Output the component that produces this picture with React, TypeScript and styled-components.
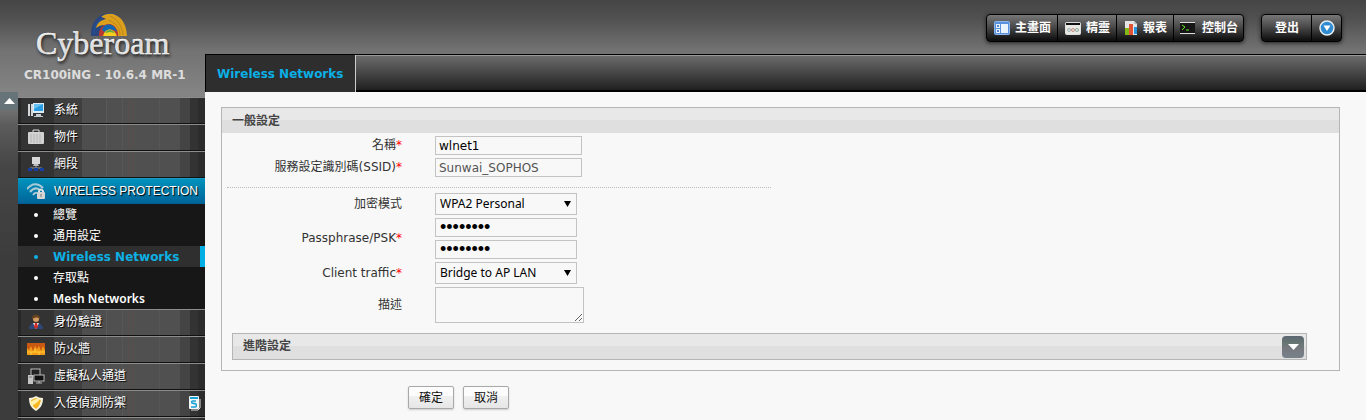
import React from "react";
import styled, { createGlobalStyle } from "styled-components";

const ui = `"DejaVu Sans", "Noto Sans CJK TC", sans-serif`;
const compact = `"Noto Sans", "Noto Sans CJK TC", sans-serif`;
const menu = `"Liberation Sans", "Noto Sans CJK TC", sans-serif`;

const GlobalStyle = createGlobalStyle`
  *, *::before, *::after { box-sizing: border-box; }
  body { margin: 0; font: 12px/18px ${ui}; color: #333; }
  button, input, select, textarea { font: inherit; color: inherit; }
`;

const Page = styled.div`
  display: grid;
  grid-template-columns: 205px minmax(0, 1fr);
  height: 100vh;
  overflow: hidden;
  background: linear-gradient(#454545 0, #525252 20px, #727272 50px, #858585 95px, #5c5c5c 125px, #464646 165px, #3c3c3c 260px);
`;

const Sidebar = styled.aside`
  display: flex;
  flex-direction: column;
  min-height: 0;
`;

const Brand = styled.div`
  display: flex;
  flex-direction: column;
  height: 92px;
  padding-top: 12px;
`;

const Logo = styled.svg`
  display: block;
  margin-left: 28px;
  flex: none;
`;

const Wordmark = styled.text`
  font: 32px "Liberation Serif", serif;
  fill: #fff;
  stroke: #fff;
  stroke-width: 0.4px;
  text-shadow: 1px 2px 3px #222;
`;

const Version = styled.p`
  margin: 0;
  padding-left: 24px;
  font-weight: bold;
  line-height: 18px;
  color: #dcdcdc;
  white-space: nowrap;
`;

const SideBody = styled.div`
  display: flex;
  flex: 1;
  align-items: flex-start;
  min-height: 0;
`;

const Collapse = styled.button`
  display: flex;
  align-items: center;
  justify-content: center;
  width: 18px;
  height: 18px;
  padding: 0;
  border: 0;
  background: #66747a;
`;

const Nav = styled.nav`
  display: flex;
  flex-direction: column;
  flex: 1;
  align-self: stretch;
  margin-top: 5px;
`;

const stripes = `
  linear-gradient(90deg, transparent 0 104px, #6a6a6a44 104px 105px, transparent 105px 110px, #6a4a4a55 110px 111px, transparent 111px 114px, #6a4a4a55 114px 115px, transparent 115px),
  linear-gradient(90deg, #272727 0 3px, #333 3px 36px, #3f3f3f 36px 64px, #4e4e4e 64px 88px, #5a5a5a 88px 89px, #505050 89px 141px, #565656 141px 142px, #505050 142px 162px, #444 162px 172px, #333 172px 180px, #2c2c2c 180px)`;

const NavLink = styled.a<{ $active?: boolean }>`
  display: grid;
  grid-template-columns: 36px 1fr auto;
  align-items: center;
  flex: none;
  height: ${p => (p.$active ? 26 : 27)}px;
  padding-right: 4px;
  padding-bottom: 1px;
  border-top: 1px solid ${p => (p.$active ? "#1b9ac4" : "#8c8c8c")};
  border-bottom: 1px solid ${p => (p.$active ? "#005f92" : "#111")};
  background: ${p => (p.$active ? "linear-gradient(#0092bd, #006499)" : stripes)};
  color: #fff;
  font: 12px/18px ${menu};
  text-decoration: none;
  text-shadow: 1px 1px 1px #000;
  white-space: nowrap;
`;

const NavFill = styled.div`
  flex: 1;
  border-top: 1px solid #8c8c8c;
  background: ${stripes};
`;

const NavIcon = styled.svg`
  display: block;
  justify-self: center;
`;

const SubMenu = styled.ul`
  flex: none;
  margin: 0;
  padding: 0;
  list-style: none;
  background: #171717;
`;

const SubLink = styled.a<{ $active?: boolean }>`
  display: flex;
  align-items: center;
  height: 21px;
  padding-left: 16px;
  gap: 15px;
  border-right: ${p => (p.$active ? "5px solid #00aee4" : "0")};
  background: ${p => (p.$active ? "#2f2f2f" : "transparent")};
  color: ${p => (p.$active ? "#0db1e4" : "#fff")};
  font-family: ${p => (p.$active ? ui : compact)};
  font-weight: ${p => (p.$active ? 700 : 600)};
  text-decoration: none;
  white-space: nowrap;
  &:lang(zh) { font-weight: 400; }
  &::before {
    content: "";
    width: 4px;
    height: 4px;
    border-radius: 50%;
    background: currentColor;
  }
`;

const Main = styled.div`
  display: flex;
  flex-direction: column;
  min-width: 0;
`;

const TopBar = styled.header`
  display: flex;
  justify-content: flex-end;
  align-items: flex-start;
  flex: none;
  gap: 17px;
  height: 54px;
  padding: 14px 24px 0 0;
`;

const ButtonGroup = styled.div`
  display: flex;
  height: 28px;
  border: 1px solid #000;
  border-radius: 4px;
  overflow: hidden;
  background: linear-gradient(#777, #4a4a4a 45%, #111 95%);
  box-shadow: 0 1px 4px #222;
`;

const ToolButton = styled.button`
  display: flex;
  align-items: center;
  justify-content: center;
  gap: 5px;
  padding: 0 6px 0 7px;
  border: 0;
  background: transparent;
  color: #fff;
  font: bold 12px/18px ${ui};
  white-space: nowrap;
  & + & { border-left: 1px solid #000; }
`;

const ConsoleButton = styled(ToolButton)`
  gap: 7px;
  padding: 0 5px 0 6px;
`;

const LogoutButton = styled(ToolButton)`
  padding: 0 12px 0 13px;
`;

const TabBar = styled.div`
  display: flex;
  flex: none;
  height: 38px;
  border-top: 1px solid #000;
  background: linear-gradient(#999 0 1px, #6b6b6b 1px, #202020 35px, #000 35px);
`;

const Tab = styled.a`
  display: flex;
  align-items: center;
  padding: 0 12px 0 11px;
  border-left: 1px solid #000;
  border-right: 1px solid #ccc;
  background: #2e2e2e;
  color: #0bb0e6;
  font-weight: bold;
  text-decoration: none;
`;

const Content = styled.main`
  flex: 1;
  padding: 15px 26px 0 16px;
  background: #f8f8f8;
`;

const Panel = styled.section`
  border: 1px solid #b5b5b5;
  padding-bottom: 10px;
`;

const PanelTitle = styled.h2`
  margin: 0;
  padding: 1px 10px 0;
  height: 25px;
  background: linear-gradient(#e8e8e8 0 48%, #dfdfdf 48%);
  font-size: 12px;
  line-height: 25px;
  font-weight: bold;
  color: #444;
`;

const Fields = styled.div`
  display: grid;
  gap: 3px;
  padding: 3px 0 0;
`;

const Field = styled.div`
  display: grid;
  grid-template-columns: 180px 1fr;
  column-gap: 33px;
  align-items: center;
`;

const Label = styled.label`
  text-align: right;
  line-height: 19px;
  white-space: nowrap;
`;

const Star = styled.span`
  color: #f00;
`;

const Input = styled.input<{ $narrow?: boolean }>`
  display: block;
  width: ${p => (p.$narrow ? 142 : 147)}px;
  height: 19px;
  padding: 0 3px;
  border: 1px solid #c3c3c3;
  background: #f8f8f8;
  color: ${p => (p.disabled ? "#545454" : "#000")};
  &[type="password"] { padding: 0 4px; font-family: "Liberation Sans", sans-serif; font-size: 18px; }
`;

const Stack = styled.div`
  display: grid;
  gap: 3px;
`;

const SelectBox = styled.div`
  position: relative;
  width: 142px;
`;

const Select = styled.select`
  display: block;
  width: 100%;
  height: 22px;
  padding: 0 4px;
  border: 1px solid #c3c3c3;
  border-radius: 0;
  appearance: none;
  background: #f8f8f8;
  color: #000;
  font: 12px/18px ${compact};
`;

const Arrow = styled.svg`
  position: absolute;
  right: 6px;
  top: 8px;
  pointer-events: none;
`;

const TextArea = styled.textarea`
  display: block;
  width: 149px;
  height: 36px;
  border: 1px solid #c3c3c3;
  background: #f8f8f8;
`;

const Divider = styled.hr`
  width: 544px;
  margin: 10px 0 2px 5px;
  border: 0;
  border-top: 1px dotted #bbb;
`;

const Advanced = styled.div`
  display: flex;
  justify-content: space-between;
  margin: 10px 32px 0 10px;
  padding: 2px 2px 1px 10px;
  border: 1px solid #b5b5b5;
  background: linear-gradient(#e8e8e8 0 48%, #dfdfdf 48%);
`;

const AdvancedTitle = styled.h3`
  margin: 0;
  font-size: 12px;
  line-height: 20px;
  color: #444;
`;

const Expand = styled.button`
  display: flex;
  align-items: center;
  justify-content: center;
  width: 22px;
  height: 22px;
  padding: 0;
  border: 0;
  border-radius: 4px;
  background: linear-gradient(#5c6672, #667572 30%, #76797e 55%, #78828a);
`;

const Actions = styled.div`
  display: flex;
  gap: 9px;
  padding: 15px 0 0 187px;
`;

const ActionButton = styled.button`
  width: 46px;
  height: 23px;
  padding: 0;
  border: 1px solid #a8a8a8;
  border-radius: 2px;
  background: linear-gradient(#fcfcfc 0 45%, #f0f0f0 45%, #e6e6e6);
  box-shadow: 0 1px 2px #ccc;
  color: #111;
`;

const CyberoamLogo = () => (
  <Logo width="150" height="54" viewBox="0 0 150 54" role="img" aria-label="Cyberoam">
    <defs>
      <clipPath id="dome"><rect width="150" height="24" /></clipPath>
    </defs>
    <g clipPath="url(#dome)">
      <path d="M63 25C62 11 70 1 82 1c10 0 14 9 10 24Z" fill="#2a4580" />
      <path d="M73 5C83-3 99 4 99 25H88c1-8-3-12-11-12-4 0-6 1-9 3 1-5 5-8 10-9-4-2-5-2-5-2Z" fill="#dca01c" />
      <path d="M82 4c7 3 12 9 13 19M80 8c7 2 12 8 12 15" fill="none" stroke="#a8741a" opacity=".6" />
      <path d="M66 22c0-8 3-12 8-15" fill="none" stroke="#1b5c9c" />
      <path d="M71 25c-1-8 4-13 10-13s10 7 9 13Z" fill="#b8392f" />
      <path d="M74 18c2-8 13-7 15 2-4-3-8-3-11 1Z" fill="#1267b5" />
      <path d="M75 25c1-10 12-10 14 0Z" fill="#f6ce20" />
      <path d="M77 21c2-4 7-4 10 0l-5-1Z" fill="#65a744" />
    </g>
    <Wordmark x="8" y="42">Cyberoam</Wordmark>
  </Logo>
);

const icons: Record<string, React.ReactNode> = {
  system: <><path d="M2 2v12M5 2v12" stroke="#d4d7d9" strokeWidth="2" /><rect x="6" y="1" width="11" height="10" fill="#d9ecf7" /><rect x="7" y="2" width="9" height="7" fill="#2a9be0" /><path d="m7 2 9 0-9 5Z" fill="#69c2ef" /><path d="M9 12h5v2h2v1H7v-1h2Z" fill="#c4cbd0" /></>,
  object: <><path d="M6 3V1h6v2" fill="none" stroke="#ddd" /><rect x="1" y="3" width="16" height="12" rx="1" fill="#d2d2d2" /><path d="M4 5v9M7 5v9M10 5v9M13 5v9" stroke="#b4b4b4" /></>,
  network: <><path d="M5 1h8v7H5Z" fill="#d8d8d8" /><path d="M7 8h4l1 2H6Z" fill="#bbb" /><path d="M9 10v2M3 13v-1h12v1" fill="none" stroke="#999" /><path d="M1 12h4v3H1ZM7 12h4v3H7ZM13 12h4v3h-4Z" fill="#173f9e" /></>,
  wireless: <><path d="M0 6Q8-3 16 5M3 9q5-6 10-2M6 12q2-3 4-2" fill="none" stroke="#a9cad6" strokeWidth="2" /><path d="M12 10V8q2-3 4 0v2" fill="none" stroke="#e0e3e4" strokeWidth="2" /><rect x="10" y="9" width="8" height="7" rx="1" fill="#d5d5d5" /><path d="M14 11v3" stroke="#777" /></>,
  user: <><path d="M2 15c0-4 3-6 7-6s7 2 7 6Z" fill="#2c4778" /><circle cx="9" cy="5" r="3" fill="#d69b62" /><path d="M5 5c-1-6 9-6 8 0-2-2-5-2-8 0Z" fill="#664321" /><path d="m6 9 3 6 3-6Z" fill="#eee" /><path d="M8 9h2l1 4-2 2-2-2Z" fill="#d22d26" /></>,
  firewall: <><rect x="0" y="2" width="18" height="12" fill="#f39c18" /><path d="M0 2h18v7l-2-4-2 5-2-5-2 3-2-3-2 5-2-5-2 4-2-2Z" fill="#c95813" /><path d="M0 11h18M4 11v3M12 11v3M8 8v3" stroke="#ffd03b" /></>,
  vpn: <><rect x="4" y="1" width="9" height="7" fill="#222" stroke="#bbb" /><path d="M1 7h5v9H1Z" fill="#c4c4c4" /><path d="M2 9h3" stroke="#777" /><rect x="7" y="7" width="10" height="6" fill="#111" stroke="#bbb" /><path d="M9 15h6M12 13v2" stroke="#bbb" /></>,
  shield: <><path d="M9 1c2 1 4 2 7 2 0 6-2 10-7 13C4 13 2 9 2 3c3 0 5-1 7-2Z" fill="#f4f1df" /><path d="M9 3c2 1 3 1 5 2-1 4-2 7-5 9-3-2-5-5-5-9 2-1 3-1 5-2Z" fill="#f7b520" /><path d="M13 4c0 1-8 8-9 7L3 7l8-4Z" fill="#fff0aa" /></>,
};

const Icon = ({ name }: { name: string }) => (
  <NavIcon width="18" height="16" viewBox="0 0 18 16" aria-hidden="true">{icons[name]}</NavIcon>
);

const SophosBadge = () => (
  <svg width="12" height="15" viewBox="0 0 12 15" aria-hidden="true">
    <path d="M2 14h7l2-2V3" fill="none" stroke="#ddd" strokeWidth="1" />
    <rect width="10" height="13" rx="1" fill="#f3f7f8" />
    <path d="M1 1h8v2H1Z" fill="#18a0d4" />
    <path d="M7 5H4Q2 5 3 7l4 1q1 3-1 3H2" fill="none" stroke="#18a0d4" strokeWidth="1.5" />
  </svg>
);

const HomeIcon = () => (
  <svg width="16" height="14" viewBox="0 0 16 14" aria-hidden="true">
    <rect x=".5" y=".5" width="15" height="13" rx="1" fill="#5a8fdc" stroke="#8bb7ef" />
    <path d="M2 3h4v4H2ZM2 8h4v4H2ZM7 3h7v9H7Z" fill="#e9f3fb" /><path d="M3 4h2v2H3ZM3 9h2v2H3Z" fill="#5686ce" />
  </svg>
);
const WizardIcon = () => (
  <svg width="16" height="14" viewBox="0 0 16 14" aria-hidden="true">
    <rect x=".5" y="1.5" width="15" height="12" rx="1" fill="#ebe9e4" stroke="#ddd" /><path d="M1 3h14" stroke="#111" strokeWidth="2" />
    <circle cx="4" cy="9" r="1.5" fill="none" stroke="#9caeb0" /><circle cx="8" cy="9" r="1.5" fill="none" stroke="#c58c81" /><circle cx="12" cy="9" r="1.5" fill="none" stroke="#8aa99f" />
  </svg>
);
const ReportIcon = () => (
  <svg width="14" height="16" viewBox="0 0 14 16" aria-hidden="true">
    <path d="M1 1h9l3 3v11H1Z" fill="#e4e5e6" /><path d="M10 1v3h3" fill="#bbb" />
    <path d="M1 8h4v7H1Z" fill="#83b718" /><path d="M5 4h4v11H5Z" fill="#e25235" /><path d="M10 7h3v7h-3Z" fill="#2695df" />
  </svg>
);
const ConsoleIcon = () => (
  <svg width="15" height="14" viewBox="0 0 15 14" aria-hidden="true">
    <rect y="1" width="15" height="12" fill="#151515" /><path d="M0 1.5h15M0 12.5h15" stroke="#ddd" />
    <path d="m2 4 3 2-3 3M6 9h3" fill="none" stroke="#62e71d" />
  </svg>
);

const NavItem = ({ icon, label, active, badge }: { icon: string; label: string; active?: boolean; badge?: boolean }) => (
  <NavLink href="#" $active={active}><Icon name={icon} /><span>{label}</span>{badge && <SophosBadge />}</NavLink>
);

const subItems = [
  { label: "總覽", lang: "zh" },
  { label: "通用設定", lang: "zh" },
  { label: "Wireless Networks", lang: "en", active: true },
  { label: "存取點", lang: "zh" },
  { label: "Mesh Networks", lang: "en" },
];

const DropDown = ({ id, value }: { id: string; value: string }) => (
  <SelectBox>
    <Select id={id} defaultValue={value}><option>{value}</option></Select>
    <Arrow width="7" height="6" viewBox="0 0 7 6" aria-hidden="true"><path d="M0 0h7L3.500 6Z" fill="#000" /></Arrow>
  </SelectBox>
);

export default function App() {
  return (
    <Page>
      <GlobalStyle />
      <Sidebar>
        <Brand><CyberoamLogo /><Version>CR100iNG - 10.6.4 MR-1</Version></Brand>
        <SideBody>
          <Collapse type="button" aria-label="Collapse menu">
            <svg width="11" height="6" viewBox="0 0 11 6"><path d="M5.500 0 11 6H0Z" fill="#fff" /></svg>
          </Collapse>
          <Nav>
            <NavItem icon="system" label="系統" />
            <NavItem icon="object" label="物件" />
            <NavItem icon="network" label="網段" />
            <NavItem icon="wireless" label="WIRELESS PROTECTION" active />
            <SubMenu>
              {subItems.map(item => (
                <li key={item.label}><SubLink href="#" lang={item.lang} $active={item.active}>{item.label}</SubLink></li>
              ))}
            </SubMenu>
            <NavItem icon="user" label="身份驗證" />
            <NavItem icon="firewall" label="防火牆" />
            <NavItem icon="vpn" label="虛擬私人通道" />
            <NavItem icon="shield" label="入侵偵測防禦" badge />
            <NavFill />
          </Nav>
        </SideBody>
      </Sidebar>
      <Main>
        <TopBar>
          <ButtonGroup>
            <ToolButton type="button"><HomeIcon />主畫面</ToolButton>
            <ToolButton type="button"><WizardIcon />精靈</ToolButton>
            <ToolButton type="button"><ReportIcon />報表</ToolButton>
            <ConsoleButton type="button"><ConsoleIcon />控制台</ConsoleButton>
          </ButtonGroup>
          <ButtonGroup>
            <LogoutButton type="button">登出</LogoutButton>
            <ToolButton type="button" aria-label="More">
              <svg width="16" height="16" viewBox="0 0 16 16"><circle cx="8" cy="8" r="7" fill="#318bd0" stroke="#e6edf3" strokeWidth="1.500" /><path d="M4.500 5.500h7L8 11Z" fill="#fff" /></svg>
            </ToolButton>
          </ButtonGroup>
        </TopBar>
        <TabBar><Tab href="#">Wireless Networks</Tab></TabBar>
        <Content>
          <Panel>
            <PanelTitle>一般設定</PanelTitle>
            <Fields>
              <Field><Label htmlFor="name">名稱<Star>*</Star></Label><Input id="name" defaultValue="wlnet1" /></Field>
              <Field><Label htmlFor="ssid">服務設定識別碼(SSID)<Star>*</Star></Label><Input id="ssid" defaultValue="Sunwai_SOPHOS" disabled /></Field>
            </Fields>
            <Divider />
            <Fields>
              <Field><Label htmlFor="mode">加密模式</Label><DropDown id="mode" value="WPA2 Personal" /></Field>
              <Field>
                <Label htmlFor="psk">Passphrase/PSK<Star>*</Star></Label>
                <Stack>
                  <Input id="psk" type="password" defaultValue="password" $narrow />
                  <Input type="password" aria-label="Confirm passphrase" defaultValue="password" $narrow />
                </Stack>
              </Field>
              <Field><Label htmlFor="traffic">Client traffic<Star>*</Star></Label><DropDown id="traffic" value="Bridge to AP LAN" /></Field>
              <Field><Label htmlFor="desc">描述</Label><TextArea id="desc" /></Field>
            </Fields>
            <Advanced>
              <AdvancedTitle>進階設定</AdvancedTitle>
              <Expand type="button" aria-label="Expand">
                <svg width="11" height="6" viewBox="0 0 11 6"><path d="M0 0h11L5.500 6Z" fill="#fff" /></svg>
              </Expand>
            </Advanced>
          </Panel>
          <Actions>
            <ActionButton type="button">確定</ActionButton>
            <ActionButton type="button">取消</ActionButton>
          </Actions>
        </Content>
      </Main>
    </Page>
  );
}
